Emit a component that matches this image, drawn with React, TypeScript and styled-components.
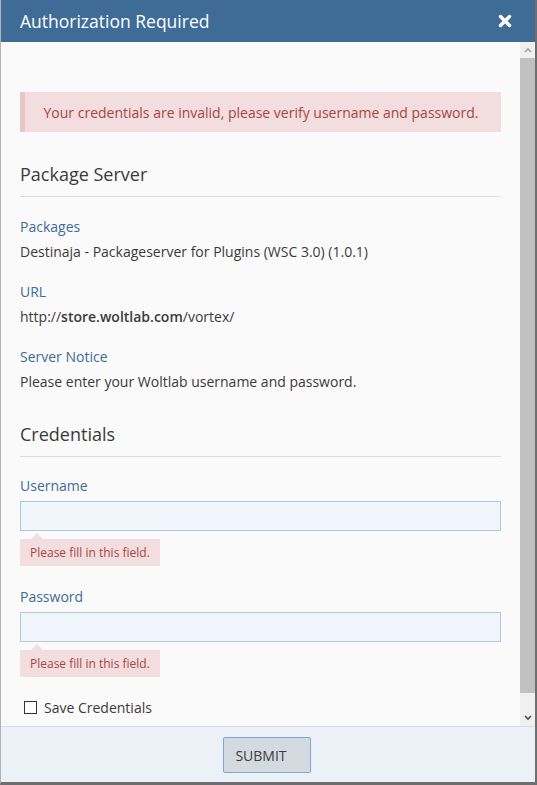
import React from "react";
import styled, { createGlobalStyle } from "styled-components";

const Global = createGlobalStyle`
  html, body { margin: 0; padding: 0; background: #fafafa; }
  body { font-family: "Open Sans", "Noto Sans", sans-serif; }
  * { box-sizing: border-box; }
`;

const Dialog = styled.div`
  width: 537px;
  height: 785px;
  display: flex;
  flex-direction: column;
  border-left: 1px solid #b4b4b4;
  border-right: 2px solid #6e6e6e;
  border-bottom: 3px solid #6e6e6e;
  background: #fafafa;
  overflow: hidden;
`;

const Header = styled.div`
  height: 42px;
  flex: none;
  background: #3e6c97;
  color: #fff;
  display: flex;
  align-items: center;
  justify-content: space-between;
  padding: 0 23px 0 19px;
`;

const Title = styled.h1`
  margin: 0;
  font-size: 17.5px;
  font-weight: 400;
`;

const Close = styled.button`
  border: 0;
  background: none;
  padding: 0;
  display: flex;
  color: #fff;
`;

const Main = styled.div`
  flex: 1;
  display: flex;
  min-height: 0;
`;

const Content = styled.div`
  flex: 1;
  padding: 50px 19px 0 19px;
  overflow: hidden;
  color: #3a3a3a;
  font-size: 14px;
`;

const Alert = styled.div`
  background: #f2dede;
  border-left: 5px solid #ebc6c9;
  color: #a94442;
  height: 40px;
  display: flex;
  align-items: center;
  justify-content: center;
  font-size: 14px;
  padding-right: 4px;
`;

const SectionTitle = styled.h2<{ $top: number }>`
  margin: ${(p) => p.$top}px 0 0;
  font-size: 18px;
  font-weight: 400;
  color: #3a3a3a;
  padding-bottom: 10px;
  border-bottom: 1px solid #dcdcdc;
`;

const Field = styled.dl<{ $top: number }>`
  margin: ${(p) => p.$top}px 0 0;
`;

const Label = styled.dt`
  color: #3e6c97;
  font-size: 14px;
  line-height: 20px;
`;

const Value = styled.dd`
  margin: 5px 0 0;
  font-size: 14px;
  line-height: 20px;
  color: #3a3a3a;
  b { font-weight: 600; }
`;

const InputGroup = styled.div<{ $top: number }>`
  margin-top: ${(p) => p.$top}px;
  display: flex;
  flex-direction: column;
  align-items: flex-start;
`;

const FieldLabel = styled.label`
  color: #3e6c97;
  font-size: 14px;
  line-height: 20px;
  margin-bottom: 5px;
`;

const TextInput = styled.input`
  width: 100%;
  height: 30px;
  background: #f1f6fc;
  border: 1px solid #b4c7de;
  border-radius: 0;
  outline: none;
  font: inherit;
`;

const Tip = styled.div`
  position: relative;
  margin-top: 8px;
  background: #f2dede;
  color: #a94442;
  font-size: 12px;
  height: 27px;
  padding: 0 10px;
  display: flex;
  align-items: center;
  width: 140px;
  &::before {
    content: "";
    position: absolute;
    top: -6px;
    left: 11px;
    border-left: 6px solid transparent;
    border-right: 6px solid transparent;
    border-bottom: 6px solid #f2dede;
  }
`;

const CheckRow = styled.label`
  margin-top: 21px;
  display: flex;
  align-items: center;
  gap: 7px;
  padding-left: 4px;
  font-size: 14px;
  color: #3a3a3a;
`;

const Box = styled.span`
  width: 13px;
  height: 13px;
  border: 1px solid #333;
  background: #fff;
  display: inline-block;
`;

const Scrollbar = styled.div`
  width: 15px;
  flex: none;
  background: #f0f0f0;
  display: flex;
  flex-direction: column;
`;

const Arrow = styled.div`
  height: 16px;
  flex: none;
  display: flex;
  align-items: center;
  justify-content: center;
`;

const Track = styled.div`
  flex: 1;
  display: flex;
  flex-direction: column;
  padding: 0 0 17px;
`;

const Thumb = styled.div`
  flex: 1;
  background: #c1c1c1;
`;

const Footer = styled.div`
  height: 56px;
  flex: none;
  background: #ecf1f8;
  border-top: 1px solid #d9dee6;
  display: flex;
  align-items: center;
  justify-content: center;
  padding-right: 2px;
`;

const Submit = styled.button`
  width: 88px;
  height: 36px;
  background: #d3dae0;
  border: 1px solid #7ea6dc;
  border-radius: 2px;
  color: #3a3a3a;
  font-family: "Open Sans", sans-serif;
  font-size: 14px;
  text-transform: uppercase;
  margin-top: 1px;
  padding: 0 12px 0 0;
`;

const Chevron = ({ up }: { up?: boolean }) => (
  <svg width="8" height="6" viewBox="0 0 8 6">
    <path
      d={up ? "M1 5 L4 2 L7 5" : "M1 1 L4 4 L7 1"}
      fill="none"
      stroke={up ? "#a3a3a3" : "#505050"}
      strokeWidth="1.6"
    />
  </svg>
);

export default function App() {
  return (
    <>
      <Global />
      <Dialog>
        <Header>
          <Title>Authorization Required</Title>
          <Close aria-label="Close">
            <svg width="14" height="14" viewBox="0 0 14 14">
              <path
                d="M2.5 2.5 L11.5 11.5 M11.5 2.5 L2.5 11.5"
                stroke="#fff"
                strokeWidth="3.4"
                strokeLinecap="round"
              />
            </svg>
          </Close>
        </Header>
        <Main>
          <Content>
            <Alert>Your credentials are invalid, please verify username and password.</Alert>

            <SectionTitle $top={30}>Package Server</SectionTitle>
            <Field $top={20}>
              <Label>Packages</Label>
              <Value>Destinaja - Packageserver for Plugins (WSC 3.0) (1.0.1)</Value>
            </Field>
            <Field $top={20}>
              <Label>URL</Label>
              <Value>
                http://<b>store.woltlab.com</b>/vortex/
              </Value>
            </Field>
            <Field $top={20}>
              <Label>Server Notice</Label>
              <Value>Please enter your Woltlab username and password.</Value>
            </Field>

            <SectionTitle $top={30}>Credentials</SectionTitle>
            <InputGroup $top={19}>
              <FieldLabel>Username</FieldLabel>
              <TextInput type="text" />
              <Tip>Please fill in this field.</Tip>
            </InputGroup>
            <InputGroup $top={21}>
              <FieldLabel>Password</FieldLabel>
              <TextInput type="password" />
              <Tip>Please fill in this field.</Tip>
            </InputGroup>
            <CheckRow>
              <Box />
              Save Credentials
            </CheckRow>
          </Content>
          <Scrollbar>
            <Arrow>
              <Chevron up />
            </Arrow>
            <Track>
              <Thumb />
            </Track>
            <Arrow>
              <Chevron />
            </Arrow>
          </Scrollbar>
        </Main>
        <Footer>
          <Submit>Submit</Submit>
        </Footer>
      </Dialog>
    </>
  );
}
